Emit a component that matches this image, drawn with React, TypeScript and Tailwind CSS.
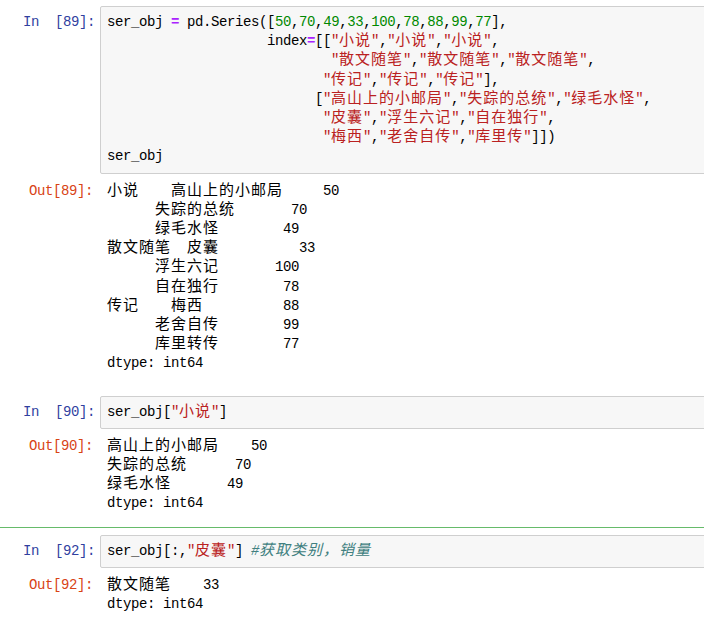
import React from "react";

// one segment of highlighted code: [kind, text]
type Seg = [("p" | "n" | "s" | "o" | "c"), string];

const segClass: Record<Seg[0], string> = {
  p: "text-black",
  n: "text-[#008800]",
  s: "text-[#BA2121]",
  o: "text-[#AA22FF] font-bold",
  c: "text-[#408080] italic",
};

// wrap runs of CJK glyphs so each one takes two monospace cells (16px)
function Cjk({ text }: { text: string }) {
  const parts = text.split(/([\u3000-\u9fff\uff00-\uffef]+)/);
  return (
    <>
      {parts.map((part, i) =>
        i % 2 === 1 ? (
          <span key={i} className="text-[15px] tracking-[1px]">
            {part}
          </span>
        ) : (
          <React.Fragment key={i}>{part}</React.Fragment>
        )
      )}
    </>
  );
}

const sp = (n: number) => " ".repeat(n);
const str = (t: string): Seg => ["s", `"${t}"`];

function strList(items: string[]): Seg[] {
  const out: Seg[] = [];
  items.forEach((it, i) => {
    if (i > 0) out.push(["p", ","]);
    out.push(str(it));
  });
  return out;
}

const nums = [50, 70, 49, 33, 100, 78, 88, 99, 77];

const cell1Code: Seg[][] = [
  [
    ["p", "ser_obj "],
    ["o", "="],
    ["p", " pd.Series(["],
    ...nums.flatMap((v, i): Seg[] => (i > 0 ? [["p", ","], ["n", String(v)]] : [["n", String(v)]])),
    ["p", "],"],
  ],
  [["p", sp(20) + "index"], ["o", "="], ["p", "[["], ...strList(["小说", "小说", "小说"]), ["p", ","]],
  [["p", sp(28)], ...strList(["散文随笔", "散文随笔", "散文随笔"]), ["p", ","]],
  [["p", sp(27)], ...strList(["传记", "传记", "传记"]), ["p", "],"]],
  [["p", sp(26) + "["], ...strList(["高山上的小邮局", "失踪的总统", "绿毛水怪"]), ["p", ","]],
  [["p", sp(27)], ...strList(["皮囊", "浮生六记", "自在独行"]), ["p", ","]],
  [["p", sp(27)], ...strList(["梅西", "老舍自传", "库里传"]), ["p", "]])"]],
  [["p", "ser_obj"]],
];

const cell1Out = [
  "小说" + sp(4) + "高山上的小邮局" + sp(5) + "50",
  sp(6) + "失踪的总统" + sp(7) + "70",
  sp(6) + "绿毛水怪" + sp(8) + "49",
  "散文随笔" + sp(2) + "皮囊" + sp(10) + "33",
  sp(6) + "浮生六记" + sp(7) + "100",
  sp(6) + "自在独行" + sp(8) + "78",
  "传记" + sp(4) + "梅西" + sp(10) + "88",
  sp(6) + "老舍自传" + sp(8) + "99",
  sp(6) + "库里转传" + sp(8) + "77",
  "dtype: int64",
];

const cell2Code: Seg[][] = [[["p", "ser_obj["], str("小说"), ["p", "]"]]];
const cell2Out = ["高山上的小邮局" + sp(4) + "50", "失踪的总统" + sp(6) + "70", "绿毛水怪" + sp(7) + "49", "dtype: int64"];

const cell3Code: Seg[][] = [[["p", "ser_obj[:,"], str("皮囊"), ["p", "] "], ["c", "#获取类别，销量"]]];
const cell3Out = ["散文随笔" + sp(4) + "33", "dtype: int64"];

function Cell({ n, code, out, className }: { n: number; code: Seg[][]; out: string[]; className?: string }) {
  return (
    <div className={className}>
      <div className="flex">
        <div className="w-[100px] shrink-0 pt-[7px] pr-[5px] text-right text-[#303F9F] whitespace-pre">
          {`In  [${n}]:`}
        </div>
        <div className="flex-1 rounded-[2px] border border-[#CFCFCF] bg-[#F7F7F7] px-[6px] py-[6px]">
          {code.map((line, i) => (
            <div key={i} className="whitespace-pre">
              {line.map(([k, t], j) => (
                <span key={j} className={segClass[k]}>
                  <Cjk text={t} />
                </span>
              ))}
            </div>
          ))}
        </div>
      </div>
      <div className="flex pt-[8px]">
        <div className="w-[100px] shrink-0 pr-[7px] text-right text-[#D84315] whitespace-pre">{`Out[${n}]:`}</div>
        <div className="flex-1 pl-[7px] text-black">
          {out.map((line, i) => (
            <div key={i} className="whitespace-pre">
              <Cjk text={line} />
            </div>
          ))}
        </div>
      </div>
    </div>
  );
}

export default function App() {
  return (
    <div className="w-[704px] h-[624px] overflow-hidden bg-white font-['Liberation_Mono','Noto_Sans_CJK_SC',monospace] text-[14px] tracking-[-0.4px] leading-[19.2px]">
      <div className="w-[780px]">
        <Cell n={89} code={cell1Code} out={cell1Out} className="mt-[6px]" />
        <Cell n={90} code={cell2Code} out={cell2Out} className="mt-[22px]" />
        <div className="mt-[13px] border-t border-[#66BB6A] pt-[7px]">
          <Cell n={92} code={cell3Code} out={cell3Out} />
        </div>
      </div>
    </div>
  );
}
